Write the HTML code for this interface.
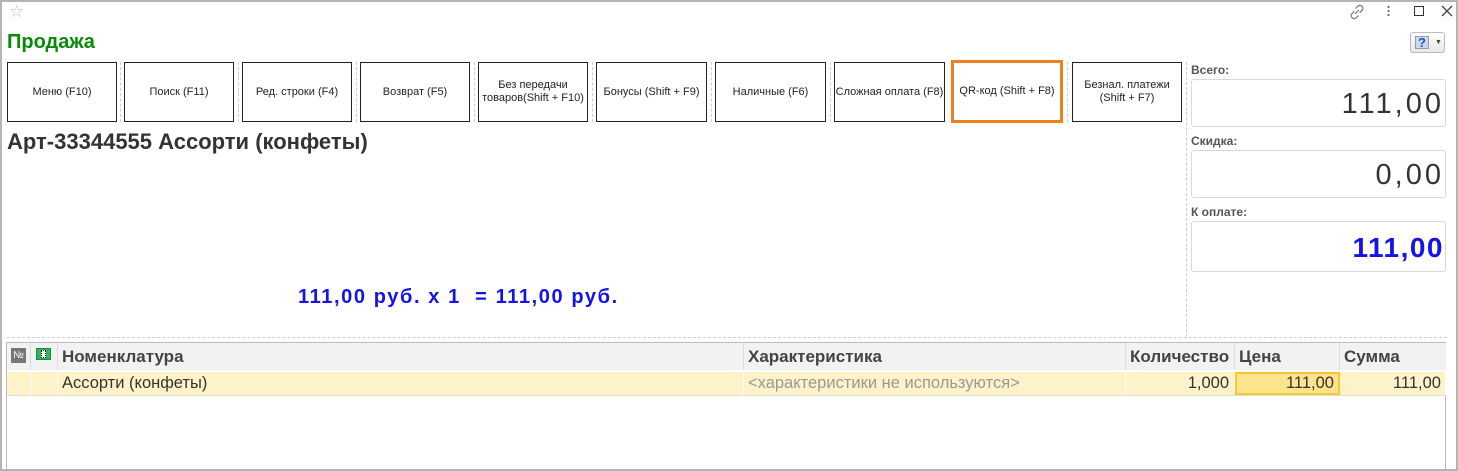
<!DOCTYPE html>
<html><head><meta charset="utf-8"><style>
*{box-sizing:border-box;margin:0;padding:0}
body{width:1458px;height:471px;background:#fff;font-family:"Liberation Sans",Arial,sans-serif;position:relative;overflow:hidden}
.a{position:absolute}
.win{left:0;top:0;width:1458px;height:471px;border:2px solid #b4b4b4}
.btn{position:absolute;top:62px;height:60px;border:1px solid #222;background:#fff;font-size:11px;color:#222;display:flex;align-items:center;justify-content:center;text-align:center;line-height:13px}
.vd{position:absolute;top:62px;height:60px;border-left:1px dashed #ccc}
.lbl{position:absolute;left:1191px;font-size:12px;font-weight:bold;color:#555}
.box{position:absolute;left:1191px;width:255px;border:1px solid #d8d8d8;border-radius:3px;font-size:29px;letter-spacing:3px;text-align:right;padding-right:1px;color:#333}
.th{position:absolute;top:343px;height:27px;background:#f2f2f2;border-right:1px solid #ddd;font-size:17px;font-weight:bold;color:#444;line-height:27px;padding-left:4px;white-space:nowrap;overflow:hidden}
.td{position:absolute;top:372px;height:23px;background:#fdf2c8;border-right:1px solid #fff;font-size:16.5px;color:#333;line-height:23px;white-space:nowrap}
</style></head><body>
<div class="a win"></div>
<div class="a" style="left:9px;top:2px;font-size:17px;color:#bbb">☆</div>
<svg class="a" style="left:1347px;top:2px" width="20" height="20" viewBox="0 0 20 20"><path d="M8 12l4-4M8.5 6.5l2.5-2.5a3 3 0 014.2 4.2l-2.5 2.5M11.5 13.5l-2.5 2.5a3 3 0 01-4.2-4.2l2.5-2.5" stroke="#777" fill="none" stroke-width="1.2"/></svg>
<div class="a" style="left:1387px;top:5px;width:3px;height:12px;background:radial-gradient(circle,#666 1px,transparent 1.2px) 0 0/3px 4px"></div>
<div class="a" style="left:1414px;top:6px;width:10px;height:10px;border:1.5px solid #333"></div>
<svg class="a" style="left:1441px;top:5px" width="12" height="12" viewBox="0 0 12 12"><path d="M1 1l10 10M11 1L1 11" stroke="#444" stroke-width="1.3"/></svg>
<div class="a" style="left:7px;top:31px;font-size:20px;font-weight:bold;color:#0a8a0a">Продажа</div>
<div class="a" style="left:1410px;top:32px;width:35px;height:21px;border:1px solid #bbb;border-radius:3px;background:linear-gradient(#fff,#e8e8e8)"><div class="a" style="left:4px;top:3px;width:14px;height:13px;background:#cfd8e8;border:1px solid #99a;font-size:13px;font-weight:bold;color:#2450c8;text-align:center;line-height:12px">?</div><div class="a" style="left:24px;top:6px;font-size:7px;color:#444">▼</div></div>

<div class="btn" style="left:7px;width:110px">Меню (F10)</div>
<div class="vd" style="left:120px"></div>
<div class="btn" style="left:124px;width:110px">Поиск (F11)</div>
<div class="vd" style="left:238px"></div>
<div class="btn" style="left:242px;width:110px">Ред. строки (F4)</div>
<div class="vd" style="left:356px"></div>
<div class="btn" style="left:360px;width:110px">Возврат (F5)</div>
<div class="vd" style="left:474px"></div>
<div class="btn" style="left:478px;width:110px">Без передачи<br>товаров(Shift + F10)</div>
<div class="vd" style="left:592px"></div>
<div class="btn" style="left:596px;width:111px">Бонусы (Shift + F9)</div>
<div class="vd" style="left:711px"></div>
<div class="btn" style="left:715px;width:111px">Наличные (F6)</div>
<div class="vd" style="left:830px"></div>
<div class="btn" style="left:834px;width:111px">Сложная оплата (F8)</div>
<div class="btn" style="left:951px;top:60px;height:63px;width:112px;border:3px solid #f07f1e">QR-код (Shift + F8)</div>
<div class="vd" style="left:1067px"></div>
<div class="btn" style="left:1072px;width:110px">Безнал. платежи<br>(Shift + F7)</div>

<div class="a" style="left:1186px;top:62px;height:275px;border-left:1px dashed #ccc"></div>
<div class="lbl" style="top:63px">Всего:</div>
<div class="box" style="top:79px;height:48px;line-height:48px">111,00</div>
<div class="lbl" style="top:134px">Скидка:</div>
<div class="box" style="top:150px;height:48px;line-height:48px">0,00</div>
<div class="lbl" style="top:205px">К оплате:</div>
<div class="box" style="top:221px;height:51px;line-height:51px;color:#1414e6;font-weight:bold;font-size:28px;letter-spacing:1.5px">111,00</div>

<div class="a" style="left:7px;top:129px;font-size:22px;font-weight:bold;color:#333">Арт-33344555 Ассорти (конфеты)</div>
<div class="a" style="left:298px;top:286px;font-size:20px;letter-spacing:1.6px;font-weight:bold;color:#1414e6;white-space:pre">111,00 руб. х 1  = 111,00 руб.</div>

<div class="a" style="left:7px;top:337px;width:1440px;border-top:1px dashed #ccc"></div>
<div class="a" style="left:6px;top:342px;width:1440px;height:127px;border:1px solid #bbb;border-bottom:none"></div>
<div class="th" style="left:7px;width:24px;padding:0"><div class="a" style="left:4px;top:5px;width:15px;height:15px;background:#777;color:#fff;font-size:10px;line-height:15px;text-align:center;font-weight:normal">№</div></div>
<div class="th" style="left:31px;width:27px;padding:0"><div class="a" style="left:5px;top:5px;width:15px;height:12px;background:#2db55d;border:1px solid #1a8a40"><div class="a" style="left:4px;top:1px;width:5px;height:8px;background:#fff;border:1px dotted #000"></div></div></div>
<div class="th" style="left:58px;width:686px">Номенклатура</div>
<div class="th" style="left:744px;width:382px">Характеристика</div>
<div class="th" style="left:1126px;width:109px">Количество</div>
<div class="th" style="left:1235px;width:105px">Цена</div>
<div class="th" style="left:1340px;width:106px;border-right:none">Сумма</div>
<div class="a" style="left:7px;top:370px;width:1439px;height:2px;background:#fff"></div>
<div class="td" style="left:7px;width:24px"></div>
<div class="td" style="left:31px;width:27px"></div>
<div class="td" style="left:58px;width:686px;padding-left:4px">Ассорти (конфеты)</div>
<div class="td" style="left:744px;width:382px;padding-left:4px;color:#999">&lt;характеристики не используются&gt;</div>
<div class="td" style="left:1126px;width:109px;text-align:right;padding-right:5px">1,000</div>
<div class="td" style="left:1235px;width:105px;text-align:right;padding-right:4px;background:#fde48c;border:2px solid #f8c630;line-height:19px">111,00</div>
<div class="td" style="left:1340px;width:106px;text-align:right;padding-right:4px">111,00</div>
<div class="a" style="left:7px;top:395px;width:1439px;border-top:1px solid #ddd"></div>
</body></html>
